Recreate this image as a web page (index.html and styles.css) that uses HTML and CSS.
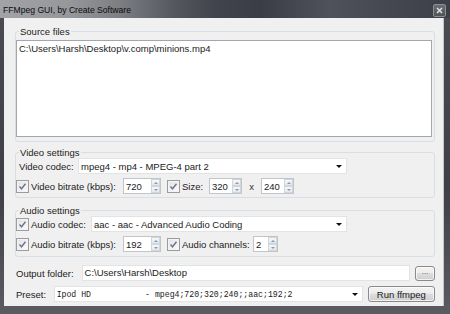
FILE: index.html
```html
<!DOCTYPE html>
<html lang="en">

<head>
  <meta charset="UTF-8">
  <title>FFMpeg GUI, by Create Software</title>
  <link rel="stylesheet" href="styles.css">
</head>

<body>
  <div class="window">
    <div class="titlebar">
      <span class="title">FFMpeg GUI, by Create Software</span>
      <span class="close-btn">
        <svg width="7" height="7" viewBox="0 0 7 7"><path d="M1 1 L6 6 M6 1 L1 6" stroke="#e8e8e8" stroke-width="1.4" /></svg>
      </span>
    </div>
    <div class="frame">
      <div class="client">

        <!-- source files -->
        <div class="group source">
          <div class="group-title">Source files</div>
          <div class="listbox">
            <div class="list-item">C:\Users\Harsh\Desktop\v.comp\minions.mp4</div>
          </div>
        </div>

        <!-- video settings -->
        <div class="group video">
          <div class="group-title">Video settings</div>
          <div class="row">
            <span class="label video-codec-label">Video codec:</span>
            <div class="combo video-codec">
              <span class="combo-text">mpeg4 - mp4 - MPEG-4 part 2</span>
              <i class="arrow"></i>
            </div>
          </div>
          <div class="row">
            <label class="check bitrate">
              <span class="box"><svg width="9" height="9" viewBox="0 0 9 9"><path d="M1.5 4.5 L3.5 6.8 L7.5 1.8" fill="none" stroke="#6a7690" stroke-width="1.4" /></svg></span>
              Video bitrate (kbps):
            </label>
            <div class="spin w38"><span class="spin-text">720</span><span class="spin-btns"><b class="up"></b><b class="down"></b></span></div>
            <label class="check size">
              <span class="box"><svg width="9" height="9" viewBox="0 0 9 9"><path d="M1.5 4.5 L3.5 6.8 L7.5 1.8" fill="none" stroke="#6a7690" stroke-width="1.4" /></svg></span>
              Size:
            </label>
            <div class="spin w33"><span class="spin-text">320</span><span class="spin-btns"><b class="up"></b><b class="down"></b></span></div>
            <span class="times">x</span>
            <div class="spin w33"><span class="spin-text">240</span><span class="spin-btns"><b class="up"></b><b class="down"></b></span></div>
          </div>
        </div>

        <!-- audio settings -->
        <div class="group audio">
          <div class="group-title">Audio settings</div>
          <div class="row">
            <label class="check audio-codec-label">
              <span class="box"><svg width="9" height="9" viewBox="0 0 9 9"><path d="M1.5 4.5 L3.5 6.8 L7.5 1.8" fill="none" stroke="#6a7690" stroke-width="1.4" /></svg></span>
              Audio codec:
            </label>
            <div class="combo audio-codec">
              <span class="combo-text">aac - aac - Advanced Audio Coding</span>
              <i class="arrow"></i>
            </div>
          </div>
          <div class="row">
            <label class="check bitrate">
              <span class="box"><svg width="9" height="9" viewBox="0 0 9 9"><path d="M1.5 4.5 L3.5 6.8 L7.5 1.8" fill="none" stroke="#6a7690" stroke-width="1.4" /></svg></span>
              Audio bitrate (kbps):
            </label>
            <div class="spin w38"><span class="spin-text">192</span><span class="spin-btns"><b class="up"></b><b class="down"></b></span></div>
            <label class="check channels">
              <span class="box"><svg width="9" height="9" viewBox="0 0 9 9"><path d="M1.5 4.5 L3.5 6.8 L7.5 1.8" fill="none" stroke="#6a7690" stroke-width="1.4" /></svg></span>
              Audio channels:
            </label>
            <div class="spin w25"><span class="spin-text">2</span><span class="spin-btns"><b class="up"></b><b class="down"></b></span></div>
          </div>
        </div>

        <!-- output -->
        <div class="row output-row">
          <span class="label output-label">Output folder:</span>
          <div class="textbox">C:\Users\Harsh\Desktop</div>
          <button class="btn browse">...</button>
        </div>
        <div class="row preset-row">
          <span class="label preset-label">Preset:</span>
          <div class="combo preset">
            <span class="combo-text mono">Ipod HD           - mpeg4;720;320;240;;aac;192;2</span>
            <i class="arrow"></i>
          </div>
          <button class="btn run">Run ffmpeg</button>
        </div>

      </div>
    </div>
  </div>
</body>

</html>
```

FILE: styles.css
```css
* {
  margin: 0;
  padding: 0;
  box-sizing: border-box;
}

body {
  width: 450px;
  height: 314px;
  overflow: hidden;
  font-family: "Liberation Sans", Arial, sans-serif;
  font-size: 9.5px;
  color: #1b1b1b;
}

.window {
  width: 450px;
  height: 314px;
  display: flex;
  flex-direction: column;
  background: linear-gradient(180deg, #4a4c52, #3e4046 60%, #5a5c61);
}

/* title bar */
.titlebar {
  height: 18px;
  display: flex;
  align-items: center;
  justify-content: space-between;
  padding: 0 4px 0 3px;
  background: linear-gradient(90deg, #a2a3a6 0, #96979a 70px, #7c7e82 120px, #54575e 175px, #41444c 215px, #3a3d45 260px, #4f525a 330px, #464951 380px, #3c3f47 450px);
}

.titlebar .title {
  font-size: 8.6px;
  color: #0c0c0c;
  padding-top: 1px;
}

.titlebar .close-btn {
  width: 13px;
  height: 13px;
  margin-top: 2px;
  display: flex;
  align-items: center;
  justify-content: center;
  border: 1px solid #8d8f94;
  border-radius: 2px;
  background: linear-gradient(180deg, #6b6d72, #515358);
}

.frame {
  flex: 1;
  padding: 0 6px 8px 4px;
}

.client {
  height: 100%;
  background: #f0f0f0;
  padding: 13px 8px 0 11px;
  border-right: 1px solid #c4c5c7;
}

/* group boxes */
.group {
  border: 1px solid #d5dfe5;
  border-radius: 3px;
}

.group-title {
  width: fit-content;
  height: 13px;
  line-height: 13px;
  margin: -7px 0 -1px 3px;
  padding: 0 1px;
  background: #f0f0f0;
  color: #222;
}

.source {
  padding: 0 2px 4px 0;
}

.source .group-title {
  margin-bottom: 2px;
}

.listbox {
  height: 97px;
  background: #fff;
  border: 1px solid #a3a6ad;
  padding: 2px 2px;
}

.video {
  margin-top: 10px;
  padding: 0 2px 3px 0;
}

.audio {
  margin-top: 12px;
  padding: 0 2px 4px 0;
}

.row {
  display: flex;
  align-items: center;
  height: 16px;
}

.group .row + .row {
  margin-top: 4px;
}

.label {
  padding-left: 3px;
  white-space: nowrap;
}

.video-codec-label {
  width: 62px;
}

/* checkboxes */
.check {
  display: flex;
  align-items: center;
  white-space: nowrap;
}

.check .box {
  width: 13px;
  height: 13px;
  margin-right: 2px;
  display: flex;
  align-items: center;
  justify-content: center;
  border: 1px solid #9a9c9f;
  background: linear-gradient(135deg, #e2e2e2, #fbfbfb);
  box-shadow: inset 0 0 0 1px #f4f4f4;
}

.check.bitrate {
  width: 107px;
}

.check.size {
  margin-left: 6px;
  width: 42px;
}

.check.channels {
  margin-left: 6px;
  width: 86px;
}

.audio-codec-label {
  width: 75px;
}

/* combos and inputs */
.combo {
  height: 16px;
  display: flex;
  align-items: center;
  justify-content: space-between;
  padding: 0 3px 0 2px;
  background: #fff;
  border: 1px solid #e2e3e5;
}

.combo .arrow {
  width: 0;
  height: 0;
  border-left: 3px solid transparent;
  border-right: 3px solid transparent;
  border-top: 3px solid #111;
  margin-right: 1px;
}

.video-codec {
  width: 269px;
}

.audio-codec {
  width: 256px;
}

.spin {
  height: 16px;
  display: flex;
  align-items: center;
  justify-content: space-between;
  background: #fff;
  border: 1px solid #c2c4c8;
  padding-left: 2px;
}

.w38 {
  width: 38px;
}

.w33 {
  width: 33px;
}

.w25 {
  width: 25px;
}

.spin-btns {
  width: 9px;
  height: 14px;
  display: flex;
  flex-direction: column;
}

.spin-btns b {
  flex: 1;
  display: flex;
  align-items: center;
  justify-content: center;
  border: 1px solid #d0d6dd;
  background: linear-gradient(180deg, #f6f7f9, #e4e8ec);
}

.spin-btns b::after {
  content: "";
  width: 0;
  height: 0;
  border-left: 2px solid transparent;
  border-right: 2px solid transparent;
}

.spin-btns .up::after {
  border-bottom: 2px solid #8a9aae;
}

.spin-btns .down::after {
  border-top: 2px solid #8a9aae;
}

.times {
  width: 19px;
  text-align: center;
  color: #333;
}

/* bottom rows */
.output-row {
  margin-top: 8px;
}

.preset-row {
  margin-top: 5px;
}

.output-label {
  width: 67px;
  padding-left: 1px;
}

.preset-label {
  width: 39px;
  padding-left: 1px;
}

.textbox {
  width: 331px;
  height: 16px;
  line-height: 14px;
  padding-left: 2px;
  background: #fff;
  border: 1px solid #e2e3e5;
}

.preset {
  width: 312px;
}

.mono {
  font-family: "Liberation Mono", "Courier New", monospace;
  font-size: 8.2px;
  white-space: pre;
}

.btn {
  font-family: inherit;
  font-size: 9.5px;
  color: #1b1b1b;
  border: 1px solid #8a8a8a;
  border-radius: 3px;
  background: linear-gradient(180deg, #f3f3f3 0, #ececec 45%, #dddddd 50%, #cfcfcf 100%);
  box-shadow: inset 0 0 0 1px rgba(255, 255, 255, 0.7);
}

.browse {
  width: 20px;
  height: 15px;
  margin-left: 5px;
  font-size: 8px;
  line-height: 10px;
  color: #555;
  padding-bottom: 3px;
}

.run {
  width: 68px;
  height: 16px;
  margin-left: 5px;
}
```
